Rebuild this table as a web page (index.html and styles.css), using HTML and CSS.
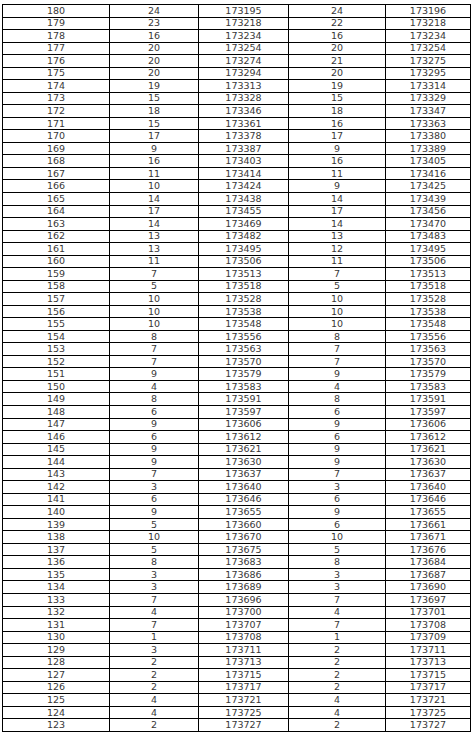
FILE: index.html
```html
<!DOCTYPE html>
<html>
<head>
<meta charset="utf-8">
<link rel="stylesheet" href="styles.css">
</head>
<body>
<table class="grid">
<colgroup><col class="c1"><col class="c2"><col class="c3"><col class="c4"><col class="c5"></colgroup>
<tbody>
<tr><td>180</td><td>24</td><td>173195</td><td>24</td><td>173196</td></tr>
<tr><td>179</td><td>23</td><td>173218</td><td>22</td><td>173218</td></tr>
<tr><td>178</td><td>16</td><td>173234</td><td>16</td><td>173234</td></tr>
<tr><td>177</td><td>20</td><td>173254</td><td>20</td><td>173254</td></tr>
<tr><td>176</td><td>20</td><td>173274</td><td>21</td><td>173275</td></tr>
<tr><td>175</td><td>20</td><td>173294</td><td>20</td><td>173295</td></tr>
<tr><td>174</td><td>19</td><td>173313</td><td>19</td><td>173314</td></tr>
<tr><td>173</td><td>15</td><td>173328</td><td>15</td><td>173329</td></tr>
<tr><td>172</td><td>18</td><td>173346</td><td>18</td><td>173347</td></tr>
<tr><td>171</td><td>15</td><td>173361</td><td>16</td><td>173363</td></tr>
<tr><td>170</td><td>17</td><td>173378</td><td>17</td><td>173380</td></tr>
<tr><td>169</td><td>9</td><td>173387</td><td>9</td><td>173389</td></tr>
<tr><td>168</td><td>16</td><td>173403</td><td>16</td><td>173405</td></tr>
<tr><td>167</td><td>11</td><td>173414</td><td>11</td><td>173416</td></tr>
<tr><td>166</td><td>10</td><td>173424</td><td>9</td><td>173425</td></tr>
<tr><td>165</td><td>14</td><td>173438</td><td>14</td><td>173439</td></tr>
<tr><td>164</td><td>17</td><td>173455</td><td>17</td><td>173456</td></tr>
<tr><td>163</td><td>14</td><td>173469</td><td>14</td><td>173470</td></tr>
<tr><td>162</td><td>13</td><td>173482</td><td>13</td><td>173483</td></tr>
<tr><td>161</td><td>13</td><td>173495</td><td>12</td><td>173495</td></tr>
<tr><td>160</td><td>11</td><td>173506</td><td>11</td><td>173506</td></tr>
<tr><td>159</td><td>7</td><td>173513</td><td>7</td><td>173513</td></tr>
<tr><td>158</td><td>5</td><td>173518</td><td>5</td><td>173518</td></tr>
<tr><td>157</td><td>10</td><td>173528</td><td>10</td><td>173528</td></tr>
<tr><td>156</td><td>10</td><td>173538</td><td>10</td><td>173538</td></tr>
<tr><td>155</td><td>10</td><td>173548</td><td>10</td><td>173548</td></tr>
<tr><td>154</td><td>8</td><td>173556</td><td>8</td><td>173556</td></tr>
<tr><td>153</td><td>7</td><td>173563</td><td>7</td><td>173563</td></tr>
<tr><td>152</td><td>7</td><td>173570</td><td>7</td><td>173570</td></tr>
<tr><td>151</td><td>9</td><td>173579</td><td>9</td><td>173579</td></tr>
<tr><td>150</td><td>4</td><td>173583</td><td>4</td><td>173583</td></tr>
<tr><td>149</td><td>8</td><td>173591</td><td>8</td><td>173591</td></tr>
<tr><td>148</td><td>6</td><td>173597</td><td>6</td><td>173597</td></tr>
<tr><td>147</td><td>9</td><td>173606</td><td>9</td><td>173606</td></tr>
<tr><td>146</td><td>6</td><td>173612</td><td>6</td><td>173612</td></tr>
<tr><td>145</td><td>9</td><td>173621</td><td>9</td><td>173621</td></tr>
<tr><td>144</td><td>9</td><td>173630</td><td>9</td><td>173630</td></tr>
<tr><td>143</td><td>7</td><td>173637</td><td>7</td><td>173637</td></tr>
<tr><td>142</td><td>3</td><td>173640</td><td>3</td><td>173640</td></tr>
<tr><td>141</td><td>6</td><td>173646</td><td>6</td><td>173646</td></tr>
<tr><td>140</td><td>9</td><td>173655</td><td>9</td><td>173655</td></tr>
<tr><td>139</td><td>5</td><td>173660</td><td>6</td><td>173661</td></tr>
<tr><td>138</td><td>10</td><td>173670</td><td>10</td><td>173671</td></tr>
<tr><td>137</td><td>5</td><td>173675</td><td>5</td><td>173676</td></tr>
<tr><td>136</td><td>8</td><td>173683</td><td>8</td><td>173684</td></tr>
<tr><td>135</td><td>3</td><td>173686</td><td>3</td><td>173687</td></tr>
<tr><td>134</td><td>3</td><td>173689</td><td>3</td><td>173690</td></tr>
<tr><td>133</td><td>7</td><td>173696</td><td>7</td><td>173697</td></tr>
<tr><td>132</td><td>4</td><td>173700</td><td>4</td><td>173701</td></tr>
<tr><td>131</td><td>7</td><td>173707</td><td>7</td><td>173708</td></tr>
<tr><td>130</td><td>1</td><td>173708</td><td>1</td><td>173709</td></tr>
<tr><td>129</td><td>3</td><td>173711</td><td>2</td><td>173711</td></tr>
<tr><td>128</td><td>2</td><td>173713</td><td>2</td><td>173713</td></tr>
<tr><td>127</td><td>2</td><td>173715</td><td>2</td><td>173715</td></tr>
<tr><td>126</td><td>2</td><td>173717</td><td>2</td><td>173717</td></tr>
<tr><td>125</td><td>4</td><td>173721</td><td>4</td><td>173721</td></tr>
<tr><td>124</td><td>4</td><td>173725</td><td>4</td><td>173725</td></tr>
<tr><td>123</td><td>2</td><td>173727</td><td>2</td><td>173727</td></tr>
</tbody>
</table>
</body>
</html>
```

FILE: styles.css
```css
html, body {
  margin: 0;
  padding: 0;
  background: #ffffff;
}
body {
  padding: 4px 0 0 2px;
}
.grid {
  border-collapse: collapse;
  table-layout: fixed;
  width: 469px;
  height: 728px;
  font-family: "DejaVu Sans", Verdana, sans-serif;
  font-size: 9.5px;
  color: #383838;
}
.c1 { width: 107px; }
.c2 { width: 89px; }
.c3 { width: 90px; }
.c4 { width: 97px; }
.c5 { width: 85px; }
.grid td {
  border: 1px solid #000;
  padding: 0;
  text-align: center;
  vertical-align: middle;
  line-height: 10px;
  white-space: nowrap;
}
```
